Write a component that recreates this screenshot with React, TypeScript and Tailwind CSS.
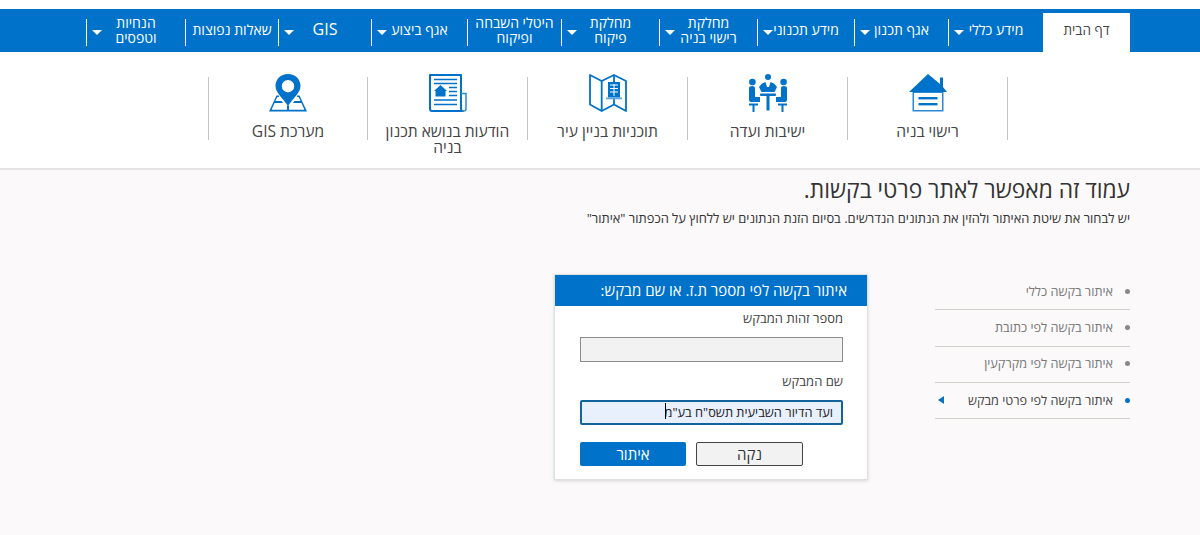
const navItems = [
  { label: 'מידע כללי', width: 'w-[95px]', arrow: true },
  { label: 'אגף תכנון', width: 'w-[94px]', arrow: true },
  { label: 'מידע תכנוני', width: 'w-[97px]', arrow: true },
  { label: 'מחלקת\nרישוי בניה', width: 'w-[98px]', arrow: true },
  { label: 'מחלקת\nפיקוח', width: 'w-[98px]', arrow: true },
  { label: 'היטלי השבחה\nופיקוח', width: 'w-[94px]', arrow: false },
  { label: 'אגף ביצוע', width: 'w-[96px]', arrow: true },
  { label: 'GIS', width: 'w-[93px]', arrow: true },
  { label: 'שאלות נפוצות', width: 'w-[93px]', arrow: false },
  { label: 'הנחיות\nוטפסים', width: 'w-[99px]', arrow: true },
];

const sideItems = ['איתור בקשה כללי', 'איתור בקשה לפי כתובת', 'איתור בקשה לפי מקרקעין', 'איתור בקשה לפי פרטי מבקש'];

const HouseIcon = () => (
  <svg className="shrink-0" width="38" height="38" viewBox="0 0 38 38" fill="#0072ca">
    <path d="M19 0 L31 10 V3.5 H34 V13 L38 18 H0 Z" />
    <path d="M3.5 18 H34.5 V37.5 H3.5 Z M5 19 V36 H33 V19 Z" fill="#2b8ad4" fillRule="evenodd" />
    <rect x="9.5" y="23" width="19" height="2.4" />
    <rect x="9.5" y="29" width="19" height="2.4" />
  </svg>
);

const MeetingIcon = () => (
  <svg className="shrink-0" width="38" height="38" viewBox="0 0 38 38" fill="#0072ca">
    <circle cx="19" cy="3" r="3" />
    <circle cx="3.4" cy="8" r="3.3" />
    <circle cx="34.6" cy="8" r="3.3" />
    <path d="M13 9.5 L16.5 8 L18 13 H20 L21.5 8 L25 9.5 L28 13 L25.5 18 H12.5 L10 13 Z" />
    <path d="M0 14 Q0 12 3.4 12 Q6 12 6 14 V23 H11 V28 H2 Q0 28 0 26 Z" />
    <path d="M38 14 Q38 12 34.6 12 Q32 12 32 14 V23 H27 V28 H36 Q38 28 38 26 Z" />
    <rect x="11" y="19.5" width="16" height="2.5" rx="1" />
    <rect x="17.5" y="21.5" width="3" height="15" />
    <path d="M0 29.5 H9 V31.5 H5.5 V38 H3.5 V31.5 H0 Z" />
    <path d="M29 29.5 H38 V31.5 H34.5 V38 H32.5 V31.5 H29 Z" />
  </svg>
);

const MapIcon = () => (
  <svg className="shrink-0" width="38" height="38" viewBox="0 0 38 38" fill="none" stroke="#0072ca" strokeWidth="1.8" strokeLinejoin="round">
    <path d="M1 1 L12.7 7 L25 1 L37 7 V37 L25 30.5 L12.7 37 L1 30.5 Z" />
    <path d="M12.7 7 V37 M25 1 V8 M25 25 V30.5" />
    <rect x="19" y="8" width="12" height="15.5" fill="#0072ca" stroke="none" />
    <path d="M21 11 H29 M21 14.5 H29 M21 18 H29 M25 10 V22" stroke="#fff" strokeWidth="1" />
    <rect x="17" y="23.5" width="16" height="1.8" fill="#5aa5dd" stroke="none" />
  </svg>
);

const NewsIcon = () => (
  <svg className="shrink-0" width="38" height="38" viewBox="0 0 38 38" fill="none" stroke="#0072ca">
    <path d="M1 1 H32 V35 Q32 37 34 37 H3 Q1 37 1 35 Z" strokeWidth="2" strokeLinejoin="round" />
    <path d="M32 19.5 H37 V35 Q37 37 34.5 37 H33" strokeWidth="1.5" stroke="#2b8ad4" />
    <path d="M5 5.5 H28 M5 9.5 H28 M20 13.5 H28 M20 17.5 H28 M20 21.5 H28 M5 26 H28 M5 30.5 H28" strokeWidth="1.3" />
    <path d="M11.5 11 L18 17 H16.5 V22.5 H6.5 V17 H5 Z" fill="#0072ca" stroke="none" />
  </svg>
);

const PinIcon = () => (
  <svg className="shrink-0" width="38" height="38" viewBox="0 0 38 38" fill="#0072ca">
    <path d="M10 21.5 H7.5 L0 37.5 H38 L30.5 21.5 H28 V23 H29.6 L31.6 27 H25.4 L24 29 H32.5 L35.4 35.7 H20 V31.5 H18 V35.7 H2.6 L5.5 29 H14 L12.6 27 H6.4 L8.4 23 H10 Z" />
    <path fillRule="evenodd" d="M19 0 C11.5 0 6.5 5.5 6.5 12 C6.5 19 14 24 19 32 C24 24 31.5 19 31.5 12 C31.5 5.5 26.5 0 19 0 Z M19 6 A6.2 6.2 0 1 1 19 18.4 A6.2 6.2 0 1 1 19 6 Z" />
  </svg>
);

const quickLinks = [
  { label: 'רישוי בניה', icon: <HouseIcon /> },
  { label: 'ישיבות ועדה', icon: <MeetingIcon /> },
  { label: 'תוכניות בניין עיר', icon: <MapIcon /> },
  { label: 'הודעות בנושא תכנון בניה', icon: <NewsIcon /> },
  { label: 'מערכת GIS', icon: <PinIcon /> },
];

export default function App() {
  return (
    <div dir="rtl" className="h-[535px] w-[1200px] overflow-hidden bg-[#fbf9fa] font-['Open_Sans','Liberation_Sans',sans-serif] text-[#333]">
      <header className="bg-white pt-[9px]">
        <nav className="flex h-[43px] items-end bg-[#0072ca] pr-[70px]">
          <a className="flex h-[39px] w-[87px] items-center justify-center bg-white pb-[5px] text-[13.5px] text-[#444]">דף הבית</a>
          {navItems.map((item) => (
            <div key={item.label} className={`${item.width} relative mb-[6px] flex h-[27px] items-center justify-center border-l border-white pb-[6px] text-white`}>
              <span className={`whitespace-pre-line text-center leading-[15px] ${item.label === 'GIS' ? 'text-[16px]' : 'text-[14px]'}`}>{item.label}</span>
              {item.arrow && <span className="absolute left-[5px] top-[11px] h-0 w-0 border-x-[5px] border-t-[5px] border-x-transparent border-t-white" />}
            </div>
          ))}
        </nav>
      </header>

      <section className="flex h-[118px] border-b-2 border-[#e4e4e4] bg-white pr-[192px] pt-[25px]">
        {quickLinks.map((link, i) => (
          <div key={link.label} className={`h-[63px] border-r border-[#c4c4c4] ${i === 4 ? 'w-[159px]' : 'w-[160px]'}`}>
            <div className="-mt-[3px] flex flex-col items-center">
              {link.icon}
              <span className="mt-[11px] w-[130px] text-center text-[15.6px] leading-[16px] text-[#444]">{link.label}</span>
            </div>
          </div>
        ))}
        <div className="h-[63px] border-r border-[#c4c4c4]" />
      </section>

      <main className="pr-[70px] pt-[6px]">
        <h1 className="text-[22.8px] leading-[27px] text-[#333]">עמוד זה מאפשר לאתר פרטי בקשות.</h1>
        <p className="mt-[7px] text-[12.9px] leading-[16px] text-[#333]">יש לבחור את שיטת האיתור ולהזין את הנתונים הנדרשים. בסיום הזנת הנתונים יש ללחוץ על הכפתור "איתור"</p>

        <div className="mt-[48px] flex items-start">
          <ul className="w-[195px] text-[12.7px]">
            {sideItems.map((item, i) => (
              <li key={item} className={`flex h-[36.3px] items-center border-b border-[#d2d0cb] pb-[1px] ${i === 3 ? 'text-[#444]' : 'text-[#777]'}`}>
                <span className={`ml-[12px] h-[5px] w-[5px] rounded-full ${i === 3 ? 'bg-[#0072ca]' : 'bg-[#888]'}`} />
                <span className="flex-1">{item}</span>
                {i === 3 && <span className="ml-[3px] h-0 w-0 border-y-[4px] border-r-[6px] border-y-transparent border-r-[#0072ca]" />}
              </li>
            ))}
          </ul>

          <div className="mr-[67px] h-[206px] w-[314px] border border-[#e0e0e0] bg-white shadow-[0_1px_3px_rgba(0,0,0,0.15)]">
            <div className="flex h-[31px] items-center bg-[#0072ca] pr-[20px] text-[15px] text-white">איתור בקשה לפי מספר ת.ז. או שם מבקש:</div>
            <div className="pl-[25px] pr-[24px]">
              <label className="mt-[4px] block text-[13px] leading-[17px] text-[#444]">מספר זהות המבקש</label>
              <input className="mt-[10px] block h-[25px] w-[263px] border border-[#8c8c8c] bg-[#f2f2f2]" />
              <label className="mt-[11px] block text-[13px] leading-[17px] text-[#444]">שם המבקש</label>
              <div className="relative mt-[9px] h-[25px] w-[263px]">
                <input
                  readOnly
                  value={'ועד הדיור השביעית תשס"ח בע"מ'}
                  className="h-full w-full rounded-[2px] border-2 border-[#14639f] bg-[#e8f0fe] pr-[8px] text-[12.8px] text-[#222] outline-none"
                />
                <span className="absolute left-[85px] top-[4px] h-[16px] w-px bg-black" />
              </div>
              <div className="mt-[18px] flex justify-end gap-[10px]">
                <button className="h-[24px] w-[107px] rounded-[2px] border border-[#444] bg-[#f2f2f2] text-[15px] text-[#333]">נקה</button>
                <button className="h-[24px] w-[106px] rounded-[2px] bg-[#0072ca] text-[15px] font-medium text-white">איתור</button>
              </div>
            </div>
          </div>
        </div>
      </main>
    </div>
  );
}
